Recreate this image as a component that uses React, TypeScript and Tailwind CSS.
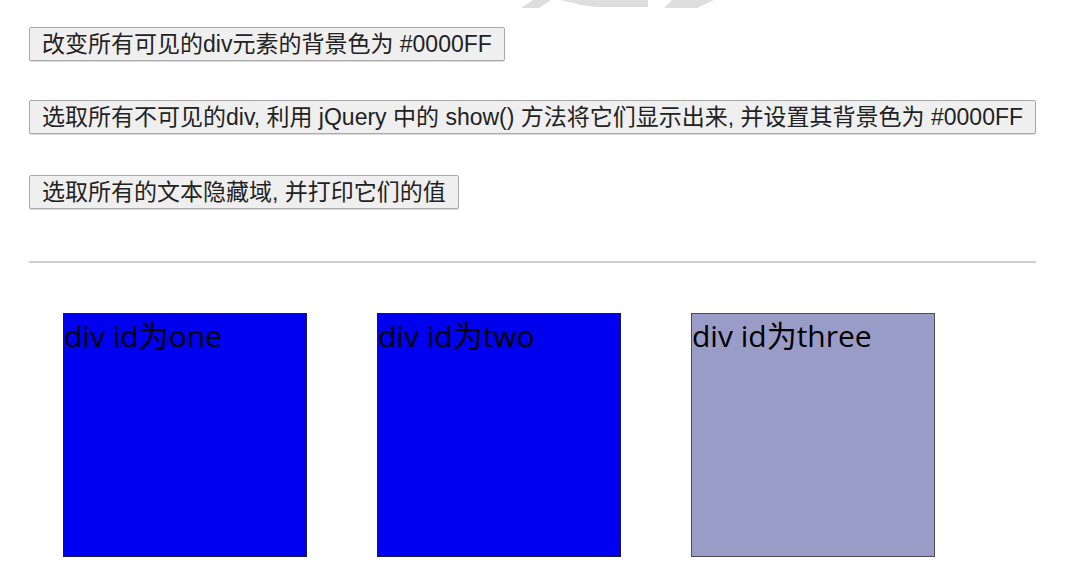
const btn =
  "block border border-[#a9a9a9] bg-[#efefef] px-[12px] text-[23px] leading-[32px] text-[#222] rounded-[2px] shadow-[0_1px_1px_rgba(0,0,0,0.15)] whitespace-nowrap";

const boxes = [
  { id: "one", bg: "bg-[#0000f0]", border: "border-[#1a1a4a]" },
  { id: "two", bg: "bg-[#0000f0]", border: "border-[#1a1a4a]" },
  { id: "three", bg: "bg-[#9a9cc8]", border: "border-[#4a4a60]" },
];

export default function App() {
  return (
    <div
      className="relative w-[1092px] h-[570px] bg-white overflow-hidden"
      style={{ fontFamily: '"Liberation Sans", "Noto Sans CJK SC", sans-serif' }}
    >
      {/* faint watermark at top edge */}
      <svg
        className="absolute left-0 top-0"
        width="1092"
        height="12"
        viewBox="0 0 1092 12"
      >
        <path d="M533 0 L551 0 L539 8 L521 8 Z" fill="#dedede" />
        <path
          d="M560 0 L648 0 L648 7 L600 7 C585 7 575 3 560 0 Z"
          fill="#dedede"
        />
        <path d="M672 0 L714 0 L697 8 L664 8 Z" fill="#dedede" />
      </svg>

      <div className="w-[1007px] ml-[29px] pt-[27px]">
        <button className={btn}>改变所有可见的div元素的背景色为 #0000FF</button>
        <button className={`${btn} mt-[39px]`}>
          选取所有不可见的div, 利用 jQuery 中的 show() 方法将它们显示出来, 并设置其背景色为 #0000FF
        </button>
        <button className={`${btn} mt-[41px]`}>
          选取所有的文本隐藏域, 并打印它们的值
        </button>

        <hr className="mt-[52px] border-0 border-t-2 border-[#cfcfcf]" />

        <div className="flex gap-[70px] ml-[34px] mt-[50px]">
          {boxes.map((b) => (
            <div
              key={b.id}
              className={`w-[244px] h-[244px] border ${b.bg} ${b.border} text-black text-[30px] leading-[44px]`}
              style={{ fontFamily: '"Open Sans", "Noto Sans CJK SC", sans-serif' }}
            >
              div id为{b.id}
            </div>
          ))}
        </div>
      </div>
    </div>
  );
}
